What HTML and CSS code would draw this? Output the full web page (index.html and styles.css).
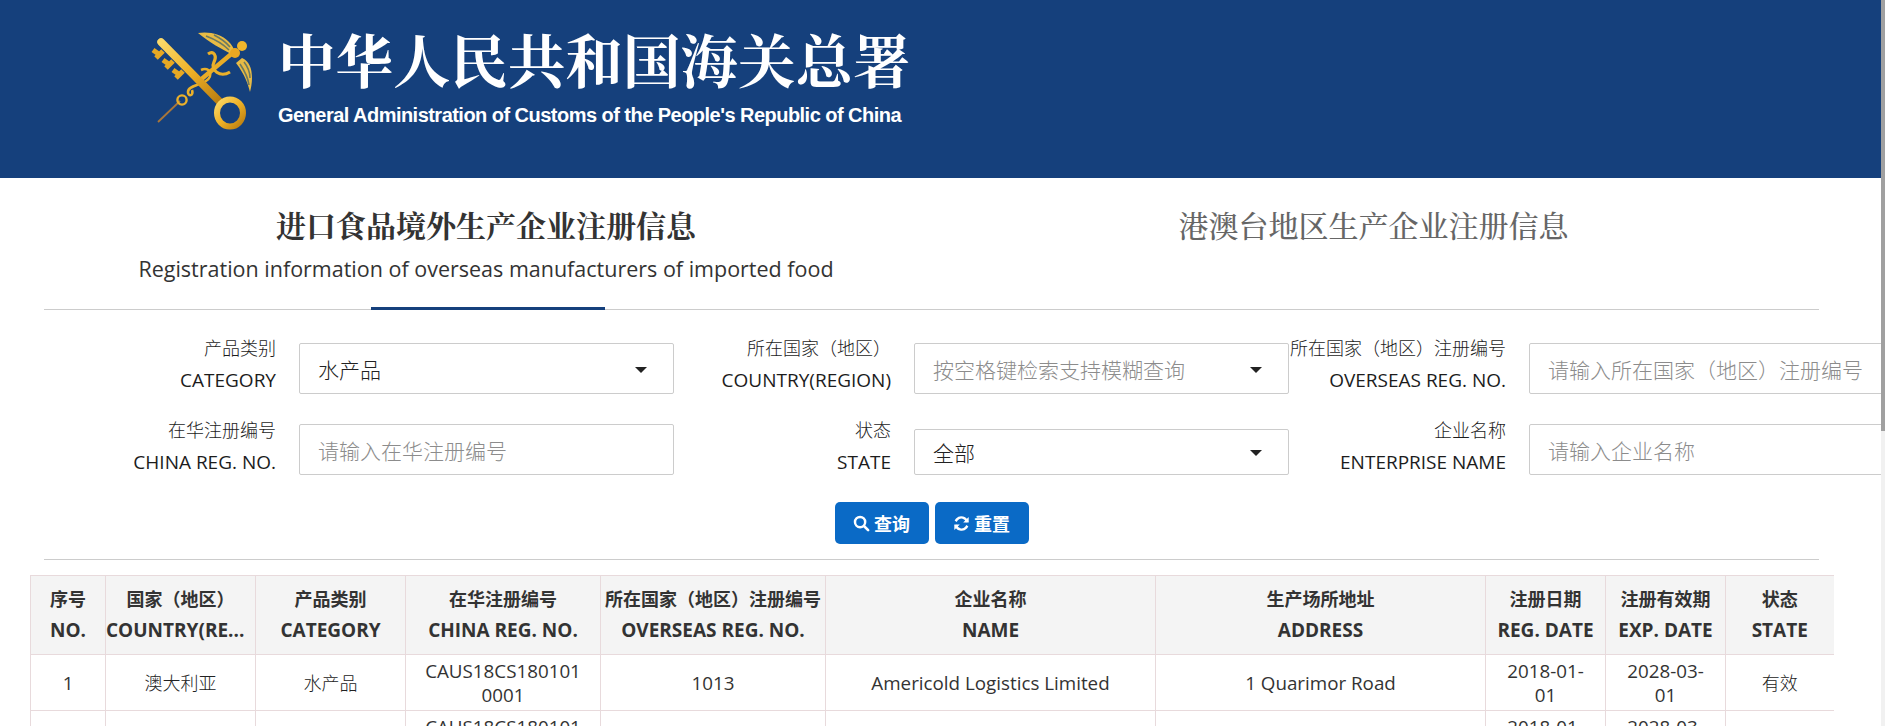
FILE: index.html
```html
<!DOCTYPE html>
<html lang="zh-CN">
<head>
  <meta charset="UTF-8">
  <title>进口食品境外生产企业注册信息</title>
  <link rel="stylesheet" href="styles.css">
</head>
<body>
  <div class="page-header">
    <svg class="logo-mark" viewBox="0 0 140 120" width="140" height="120" xmlns="http://www.w3.org/2000/svg">
      <defs>
        <linearGradient id="gold" x1="0" y1="0" x2="1" y2="1">
          <stop offset="0" stop-color="#fbd968"/>
          <stop offset="0.5" stop-color="#eeb127"/>
          <stop offset="1" stop-color="#b87c10"/>
        </linearGradient>
      </defs>
      <!-- caduceus staff -->
      <path d="M28 102 L50 81" stroke="#a9763a" stroke-width="1.8" fill="none"/>
      <path d="M68 62 L106 30" stroke="#e9ac26" stroke-width="4.5" fill="none"/>
      <!-- wings -->
      <path d="M68 13 C78 11 92 14 98 21 C102 25 104 28 104 31 L101 34 C92 29 80 23 68 13Z" fill="#e8bb45"/>
      <path d="M76 16 C84 19 92 23 99 30 M84 15 C90 18 95 21 100 27" stroke="#6d7a60" stroke-width="1.6" fill="none"/>
      <path d="M112 38 C119 41 122 48 122 58 C122 63 121 68 120 72 C118 64 115 55 106 43Z" fill="#e8bb45"/>
      <path d="M110 44 C114 50 118 57 119 65 M114 42 C118 47 120 52 120 58" stroke="#6d7a60" stroke-width="1.6" fill="none"/>
      <circle cx="112" cy="26" r="5" fill="#f0b62c"/>
      <circle cx="105" cy="33" r="5" fill="#e9a722"/>
      <!-- snakes -->
      <path d="M78 34 C84 30 87 36 84 42 C80 50 90 58 100 52" stroke="#eab02a" stroke-width="3.2" fill="none"/>
      <path d="M71 50 C80 46 84 56 76 61 C68 66 58 66 58 72 C58 77 64 76 62 70" stroke="#eab02a" stroke-width="2.6" fill="none"/>
      <circle cx="52" cy="80" r="4.6" stroke="#eab02a" stroke-width="2.4" fill="none"/>
      <!-- key -->
      <path d="M31 22 L90 82" stroke="url(#gold)" stroke-width="7.5" stroke-linecap="round" fill="none"/>
      <path d="M33 31 L26 38 M30 35 L23 30 M43 41 L36 48 M40 45 L33 40 M53 51 L46 58 M50 55 L43 50" stroke="#e6a823" stroke-width="5" fill="none"/>
      <ellipse cx="100" cy="93" rx="13" ry="13.5" stroke="url(#gold)" stroke-width="6" fill="none"/>
    </svg>
    <div class="logo-text">
      <div class="logo-cn">中华人民共和国海关总署</div>
      <div class="logo-en">General Administration of Customs of the People's Republic of China</div>
    </div>
  </div>

  <div class="tabs">
    <div class="tab tab-active">
      <div class="tab-cn">进口食品境外生产企业注册信息</div>
      <div class="tab-en">Registration information of overseas manufacturers of imported food</div>
    </div>
    <div class="tab tab-other">
      <div class="tab-cn">港澳台地区生产企业注册信息</div>
    </div>
  </div>

  <div class="search-form">
    <div class="form-row">
      <label class="field-label">产品类别<span class="en">CATEGORY</span></label>
      <div class="control select-control"><span>水产品</span><i class="caret"></i></div>
      <label class="field-label">所在国家（地区）<span class="en">COUNTRY(REGION)</span></label>
      <div class="control select-control"><span class="placeholder">按空格键检索支持模糊查询</span><i class="caret"></i></div>
      <label class="field-label">所在国家（地区）注册编号<span class="en">OVERSEAS REG. NO.</span></label>
      <div class="control"><span class="placeholder">请输入所在国家（地区）注册编号</span></div>
    </div>
    <div class="form-row">
      <label class="field-label">在华注册编号<span class="en">CHINA REG. NO.</span></label>
      <div class="control"><span class="placeholder">请输入在华注册编号</span></div>
      <label class="field-label">状态<span class="en">STATE</span></label>
      <div class="control select-control select-small"><span>全部</span><i class="caret"></i></div>
      <label class="field-label">企业名称<span class="en">ENTERPRISE NAME</span></label>
      <div class="control"><span class="placeholder">请输入企业名称</span></div>
    </div>
  </div>

  <div class="form-buttons">
    <button class="btn">
      <svg viewBox="0 0 18 18" width="17" height="17" xmlns="http://www.w3.org/2000/svg"><circle cx="7.5" cy="7.5" r="5.4" fill="none" stroke="#fff" stroke-width="2.6"/><path d="M11.6 11.6 L16 16" stroke="#fff" stroke-width="2.8" stroke-linecap="round"/></svg>
      查询
    </button>
    <button class="btn">
      <svg viewBox="0 0 18 18" width="17" height="17" xmlns="http://www.w3.org/2000/svg"><path d="M15 7.5 A6.3 6.3 0 0 0 4.2 4.6 L2.8 6.6" fill="none" stroke="#fff" stroke-width="2.6"/><path d="M16.6 2 V8 H10.8Z" fill="#fff"/><path d="M3 10.5 A6.3 6.3 0 0 0 13.8 13.4 L15.2 11.4" fill="none" stroke="#fff" stroke-width="2.6"/><path d="M1.4 16 V10 H7.2Z" fill="#fff"/></svg>
      重置
    </button>
  </div>

  <hr class="form-line">

  <table class="result-table">
    <colgroup>
      <col class="w75"><col class="w150"><col class="w150"><col class="w195"><col class="w225">
      <col class="w330"><col class="w330"><col class="w120"><col class="w120"><col class="w108">
    </colgroup>
    <thead>
      <tr>
        <th>序号<br><span class="en">NO.</span></th>
        <th>国家（地区）<span class="en clipped">COUNTRY(RE...</span></th>
        <th>产品类别<br><span class="en">CATEGORY</span></th>
        <th>在华注册编号<br><span class="en">CHINA REG. NO.</span></th>
        <th>所在国家（地区）注册编号<br><span class="en">OVERSEAS REG. NO.</span></th>
        <th>企业名称<br><span class="en">NAME</span></th>
        <th>生产场所地址<br><span class="en">ADDRESS</span></th>
        <th>注册日期<br><span class="en">REG. DATE</span></th>
        <th>注册有效期<br><span class="en">EXP. DATE</span></th>
        <th>状态<br><span class="en">STATE</span></th>
      </tr>
    </thead>
    <tbody>
      <tr>
        <td class="en">1</td>
        <td>澳大利亚</td>
        <td>水产品</td>
        <td class="en">CAUS18CS180101<br>0001</td>
        <td class="en">1013</td>
        <td class="en">Americold Logistics Limited</td>
        <td class="en">1 Quarimor Road</td>
        <td class="en">2018-01-<br>01</td>
        <td class="en">2028-03-<br>01</td>
        <td>有效</td>
      </tr>
      <tr>
        <td></td>
        <td></td>
        <td></td>
        <td class="en">CAUS18CS180101<br>0002</td>
        <td></td>
        <td></td>
        <td></td>
        <td class="en">2018-01-<br>01</td>
        <td class="en">2028-03-<br>01</td>
        <td></td>
      </tr>
    </tbody>
  </table>

  <div class="scroll-track"><div class="scroll-thumb"></div></div>
</body>
</html>
```

FILE: styles.css
```css
* {
  box-sizing: border-box;
  margin: 0;
  padding: 0;
}

html, body {
  height: 726px;
  overflow: hidden;
}

body {
  position: relative;
  width: 1885px;
  background: #fff;
  color: #333;
  font-family: "Open Sans", "Noto Sans CJK SC", sans-serif;
  font-size: 18px;
  font-weight: 300;
}

.en {
  font-size: 19px;
  font-weight: 400;
}

/* header band */
.page-header {
  height: 178px;
  background: #15407c;
  padding: 20px 0 0 130px;
  display: flex;
  align-items: flex-start;
  gap: 8px;
}

.logo-text {
  color: #fff;
  width: 640px;
  margin-top: -1px;
}

.logo-cn {
  font-family: "Noto Serif CJK SC", "Noto Sans CJK SC", serif;
  font-size: 57.5px;
  font-weight: 700;
  line-height: 78px;
  white-space: nowrap;
}

.logo-en {
  font-family: "Liberation Sans", sans-serif;
  font-size: 20px;
  font-weight: 700;
  letter-spacing: -0.53px;
  line-height: 22px;
  margin-top: 7px;
  white-space: nowrap;
}

/* tabs */
.tabs {
  margin: 0 66px 0 44px;
  height: 132px;
  border-bottom: 1px solid #ccc;
  display: flex;
}

.tab {
  padding-top: 26px;
  text-align: center;
  position: relative;
}

.tab-cn {
  font-family: "Noto Serif CJK SC", "Noto Sans CJK SC", serif;
  font-size: 30px;
  line-height: 40px;
  white-space: nowrap;
}

.tab-en {
  font-size: 21.5px;
  font-weight: 400;
  line-height: 28px;
  margin-top: 11px;
  white-space: nowrap;
}

.tab-active {
  width: 886px;
}

.tab-active .tab-cn {
  font-weight: 700;
}

.tab-active::after {
  content: "";
  position: absolute;
  left: 327px;
  bottom: -1px;
  width: 234px;
  height: 3px;
  background: #15407c;
}

.tab-other {
  color: #666;
  width: 893px;
}

.tab-other .tab-cn {
  font-weight: 500;
}

/* search form */
.search-form {
  padding-top: 22px;
  display: flex;
  flex-direction: column;
  gap: 18px;
}

.form-row {
  display: grid;
  grid-template-columns: 276px 375px 194px 375px 194px 360px;
  column-gap: 23px;
  align-items: start;
  width: 1881px;
  overflow: hidden;
}

.field-label {
  display: flex;
  flex-direction: column;
  align-items: flex-end;
  font-size: 18px;
  line-height: 32px;
  white-space: nowrap;
  color: #1c1c1c;
}

.control {
  height: 51px;
  margin-top: 11px;
  border: 1px solid #ccc;
  border-radius: 2px;
  font-size: 21px;
  color: #222;
  padding: 0 18px;
  display: flex;
  align-items: center;
  justify-content: space-between;
  white-space: nowrap;
}

.form-row + .form-row .control {
  margin-top: 10px;
}

.form-row + .form-row .select-small {
  height: 46px;
  margin-top: 15px;
}

.placeholder {
  color: #8c8c8c;
}

.caret {
  width: 0;
  height: 0;
  border-left: 6px solid transparent;
  border-right: 6px solid transparent;
  border-top: 6px solid #222;
  margin: 2px 8px 0 0;
}

/* buttons */
.form-buttons {
  margin-top: 24px;
  display: flex;
  justify-content: center;
  gap: 6px;
  padding-right: 22px;
}

.btn {
  width: 94px;
  height: 42px;
  background: #0a6ac6;
  border: none;
  border-radius: 5px;
  color: #fff;
  font-family: "Open Sans", "Noto Sans CJK SC", sans-serif;
  font-size: 18px;
  font-weight: 700;
  display: flex;
  align-items: center;
  justify-content: center;
  gap: 4px;
}

.form-line {
  border: none;
  border-top: 1px solid #ccc;
  margin: 15px 66px 0 44px;
}

/* results table */
.result-table {
  margin: 15px 0 0 30px;
  width: 1803px;
  table-layout: fixed;
  border-collapse: collapse;
}

.w75 { width: 75px; }
.w108 { width: 108px; }
.w120 { width: 120px; }
.w150 { width: 150px; }
.w195 { width: 195px; }
.w225 { width: 225px; }
.w330 { width: 330px; }

.result-table th,
.result-table td {
  border: 1px solid #e8dadc;
  text-align: center;
  vertical-align: middle;
  overflow: hidden;
  white-space: nowrap;
}

.result-table tr > :last-child {
  border-right: none;
}

.result-table th {
  height: 79px;
  background: #f4f4f4;
  font-size: 18px;
  line-height: 31px;
  font-weight: 700;
  color: #333;
}

.result-table th .en {
  font-weight: 700;
}

.result-table th .clipped {
  display: block;
  text-align: left;
}

.result-table td {
  height: 56px;
  font-size: 18px;
  line-height: 24px;
  color: #222;
}

.result-table td.en {
  font-size: 18.8px;
  color: #333;
}

/* page scrollbar */
.scroll-track {
  position: absolute;
  top: 0;
  right: 0;
  width: 4px;
  height: 726px;
  background: #f1f1f1;
}

.scroll-thumb {
  height: 431px;
  background: #a0a0a0;
}
```
